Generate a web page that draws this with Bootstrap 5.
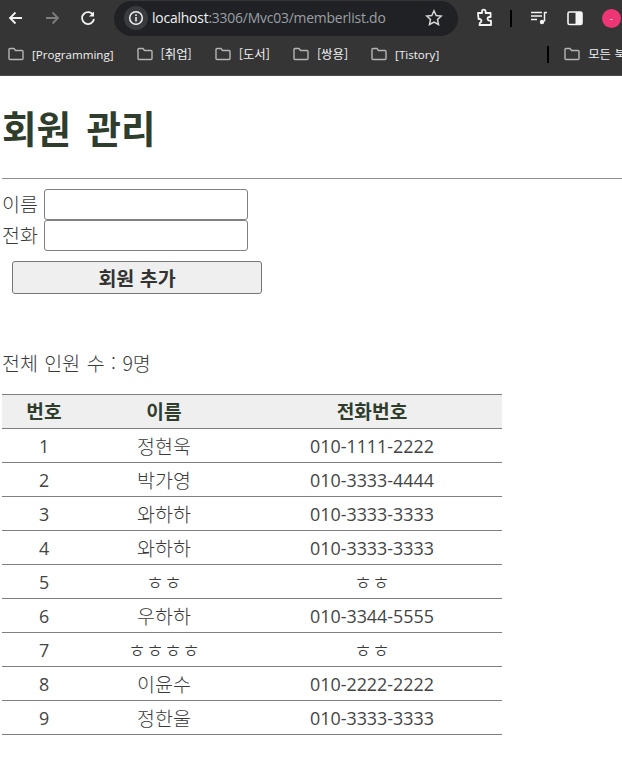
<!DOCTYPE html>
<html lang="ko">
<head>
<meta charset="utf-8">
<title>회원 관리</title>
<link href="https://cdn.jsdelivr.net/npm/bootstrap@5.3.0/dist/css/bootstrap.min.css" rel="stylesheet">
<style>
html,body{margin:0;background:#fff;overflow:hidden}
body{font-family:"Noto Sans","Noto Sans CJK KR",sans-serif;color:#333;width:622px;height:759px}
.chrome-top{height:38px;background:#353535;padding:0 0 2px 6px}
.nav-ic{width:20px;height:20px;flex:none;margin-right:16px}
.addr{width:344px;height:35px;background:#202124;border-radius:18px;flex:none;padding:0 14px 0 10px;font-family:"Open Sans","Noto Sans",sans-serif;font-size:13.9px;letter-spacing:-.2px;color:#9aa0a6}
.addr .host{color:#f1f3f4}
.site-ic{width:24px;height:24px;border-radius:50%;background:#3a3b3e;flex:none}
.tool-ic{flex:none}
.vsep{width:2px;height:17px;background:#000;flex:none}
.avatar{width:19px;height:19px;border-radius:50%;background:#ee3576;color:#fff;font-size:9px;line-height:19px;text-align:center;flex:none}
.ext-gap{margin-left:17px}.sep-gap{margin-left:15px}.rt-gap{margin-left:18px}
.bm-end-sep{margin-left:85px;margin-right:15px}
.bm-bar{height:38px;background:#353535;border-bottom:1px solid #4a4a4a;font-family:"Open Sans","Noto Sans CJK KR",sans-serif;font-size:11.6px;color:#f1f1f1;white-space:nowrap;overflow:hidden;padding:0 0 4px 8px}
.bm{gap:8px;margin-right:23px;flex:none}
.bm svg{flex:none}
.bm-kr{font-size:12.4px;font-family:"Noto Sans CJK KR",sans-serif}
.page-wrap{padding:0 0 0 2px}
.ttl{font-family:"Noto Sans CJK KR",sans-serif;font-size:37.5px;font-weight:700;line-height:1;word-spacing:5px;color:#2f3d2c;margin:32px 0 32.5px 0}
.rule{height:1px;background:#8f8f8f;border:0;opacity:1;margin:0 0 10px 0}
.frm-row{height:31px}
.frm-lbl{font-size:19.500px;width:42px;font-family:"Noto Sans CJK KR",sans-serif;font-weight:300;color:#3a3a3a;line-height:29px}
.frm-in{width:204px;height:31px;border:1px solid #808080;border-radius:3px;background:#fff;padding:0 4px;display:block}
.add-btn{display:block;width:250px;height:33px;margin:10px 0 0 10px;background:#efefef;border:1px solid #767676;border-radius:3px;font-family:"Noto Sans CJK KR",sans-serif;font-size:19.500px;font-weight:700;line-height:29px;color:#333;padding:0}
.cnt{font-size:19.500px;word-spacing:1px;font-family:"Noto Sans CJK KR",sans-serif;font-weight:300;color:#3a3a3a;line-height:26px;margin:56px 0 18px 0}
.mem{width:500px;border-collapse:collapse;table-layout:fixed;font-size:17.900px;color:#444;text-align:center;font-family:"Open Sans","Noto Sans CJK KR",sans-serif}
.mem th,.mem td{height:34px;padding:0;border-top:1px solid #808080;border-bottom:1px solid #808080;line-height:33px;overflow:hidden;white-space:nowrap}
.mem td{padding-top:1px;line-height:32px}
.mem th{background:#efefef;font-family:"Noto Sans CJK KR",sans-serif;font-size:19.200px;font-weight:700;color:#2f3d2c}
.mem td.kr{font-family:"Noto Sans CJK KR",sans-serif;font-size:19.500px;font-weight:300;padding-top:0;line-height:31px;color:#3a3a3a}
.c1{width:84px}.c2{width:156px}.c3{width:260px}
</style>
</head>
<body>
<div class="chrome-top d-flex align-items-center">
  <svg class="nav-ic" viewBox="0 0 20 20" fill="none" stroke="#f1f3f4" stroke-width="1.800"><path d="M16 10H4M9.500 4.500 4 10l5.500 5.500"/></svg>
  <svg class="nav-ic" viewBox="0 0 20 20" fill="none" stroke="#7e7e7e" stroke-width="1.800"><path d="M4 10h12M10.500 4.500 16 10l-5.500 5.500"/></svg>
  <svg class="nav-ic" viewBox="0 0 20 20" fill="none" stroke="#f1f3f4" stroke-width="1.800"><path d="M15.500 7.500A6 6 0 1 0 16 11"/><path d="M16 3.500v5h-5" fill="#f1f3f4" stroke="none"/></svg>
  <div class="addr d-flex align-items-center">
    <div class="site-ic d-flex align-items-center justify-content-center"><svg width="16" height="16" viewBox="0 0 16 16" fill="none" stroke="#f1f3f4" stroke-width="1.500"><circle cx="8" cy="8" r="6.300"/><path d="M8 7v4.500M8 4.300v1.600"/></svg></div>
    <span class="ms-1"><span class="host">localhost</span>:3306/Mvc03/memberlist.do</span>
    <svg class="ms-auto tool-ic" width="20" height="20" viewBox="0 0 20 20" fill="none" stroke="#d6d6d6" stroke-width="1.500"><path d="m10 2.800 2.200 4.700 5 .6-3.700 3.400 1 5L10 14l-4.500 2.500 1-5L2.800 8.100l5-.6z"/></svg>
  </div>
  <svg class="tool-ic ext-gap" width="20" height="20" viewBox="0 0 20 20" fill="none" stroke="#f4f4f4" stroke-width="1.800"><path d="M3 5h4V3.500a1.800 1.800 0 0 1 3.600 0V5h5v4h-1.200a1.800 1.800 0 0 0 0 3.600H16v4.400H4.500l.6-2.500a1.800 1.800 0 0 0 0-3.500L3.500 11z" stroke-linejoin="round"/></svg>
  <div class="vsep sep-gap"></div>
  <svg class="tool-ic rt-gap" width="18" height="18" viewBox="0 0 18 18" fill="none" stroke="#f4f4f4" stroke-width="1.500"><path d="M1 3.500h11M1 7h11M1 10.500h6M14.500 3.500H17M14.500 3v9.500"/><circle cx="12" cy="13" r="2.200" fill="#f4f4f4" stroke="none"/></svg>
  <svg class="tool-ic rt-gap" width="18" height="18" viewBox="0 0 18 18"><rect x="2" y="3" width="14" height="12.500" rx="1.500" fill="none" stroke="#f4f4f4" stroke-width="1.600"/><rect x="9.500" y="3" width="6.500" height="12.500" fill="#f4f4f4"/></svg>
  <div class="avatar rt-gap">-</div>
</div>
<div class="bm-bar d-flex align-items-center">
  <div class="bm d-flex align-items-center"><svg width="16" height="14" viewBox="0 0 16 14" fill="none" stroke="#b5b5b5" stroke-width="1.400"><path d="M1 2.500a1 1 0 0 1 1-1h4l1.500 2H14a1 1 0 0 1 1 1v7a1 1 0 0 1-1 1H2a1 1 0 0 1-1-1z"/></svg><span>[Programming]</span></div>
  <div class="bm d-flex align-items-center"><svg width="16" height="14" viewBox="0 0 16 14" fill="none" stroke="#b5b5b5" stroke-width="1.400"><path d="M1 2.500a1 1 0 0 1 1-1h4l1.500 2H14a1 1 0 0 1 1 1v7a1 1 0 0 1-1 1H2a1 1 0 0 1-1-1z"/></svg><span class="bm-kr">[취업]</span></div>
  <div class="bm d-flex align-items-center"><svg width="16" height="14" viewBox="0 0 16 14" fill="none" stroke="#b5b5b5" stroke-width="1.400"><path d="M1 2.500a1 1 0 0 1 1-1h4l1.500 2H14a1 1 0 0 1 1 1v7a1 1 0 0 1-1 1H2a1 1 0 0 1-1-1z"/></svg><span class="bm-kr">[도서]</span></div>
  <div class="bm d-flex align-items-center"><svg width="16" height="14" viewBox="0 0 16 14" fill="none" stroke="#b5b5b5" stroke-width="1.400"><path d="M1 2.500a1 1 0 0 1 1-1h4l1.500 2H14a1 1 0 0 1 1 1v7a1 1 0 0 1-1 1H2a1 1 0 0 1-1-1z"/></svg><span class="bm-kr">[쌍용]</span></div>
  <div class="bm d-flex align-items-center"><svg width="16" height="14" viewBox="0 0 16 14" fill="none" stroke="#b5b5b5" stroke-width="1.400"><path d="M1 2.500a1 1 0 0 1 1-1h4l1.500 2H14a1 1 0 0 1 1 1v7a1 1 0 0 1-1 1H2a1 1 0 0 1-1-1z"/></svg><span>[Tistory]</span></div>
  <div class="vsep bm-end-sep"></div>
  <div class="bm d-flex align-items-center"><svg width="16" height="14" viewBox="0 0 16 14" fill="none" stroke="#b5b5b5" stroke-width="1.400"><path d="M1 2.500a1 1 0 0 1 1-1h4l1.500 2H14a1 1 0 0 1 1 1v7a1 1 0 0 1-1 1H2a1 1 0 0 1-1-1z"/></svg><span class="bm-kr">모든 북마크</span></div>
</div>
<div class="page-wrap">
  <h1 class="ttl">회원 관리</h1>
  <hr class="rule">
  <form>
    <div class="frm-row d-flex"><label class="frm-lbl">이름</label><input class="frm-in" type="text"></div>
    <div class="frm-row d-flex"><label class="frm-lbl">전화</label><input class="frm-in" type="text"></div>
    <button class="add-btn" type="button">회원 추가</button>
  </form>
  <p class="cnt">전체 인원 수 : 9명</p>
  <table class="mem">
    <colgroup><col class="c1"><col class="c2"><col class="c3"></colgroup>
    <thead><tr><th>번호</th><th>이름</th><th>전화번호</th></tr></thead>
    <tbody>
      <tr><td>1</td><td class="kr">정현욱</td><td>010-1111-2222</td></tr>
      <tr><td>2</td><td class="kr">박가영</td><td>010-3333-4444</td></tr>
      <tr><td>3</td><td class="kr">와하하</td><td>010-3333-3333</td></tr>
      <tr><td>4</td><td class="kr">와하하</td><td>010-3333-3333</td></tr>
      <tr><td>5</td><td class="kr">ㅎㅎ</td><td class="kr">ㅎㅎ</td></tr>
      <tr><td>6</td><td class="kr">우하하</td><td>010-3344-5555</td></tr>
      <tr><td>7</td><td class="kr">ㅎㅎㅎㅎ</td><td class="kr">ㅎㅎ</td></tr>
      <tr><td>8</td><td class="kr">이윤수</td><td>010-2222-2222</td></tr>
      <tr><td>9</td><td class="kr">정한울</td><td>010-3333-3333</td></tr>
    </tbody>
  </table>
</div>
<script src="https://cdn.jsdelivr.net/npm/bootstrap@5.3.0/dist/js/bootstrap.bundle.min.js"></script>
</body>
</html>
